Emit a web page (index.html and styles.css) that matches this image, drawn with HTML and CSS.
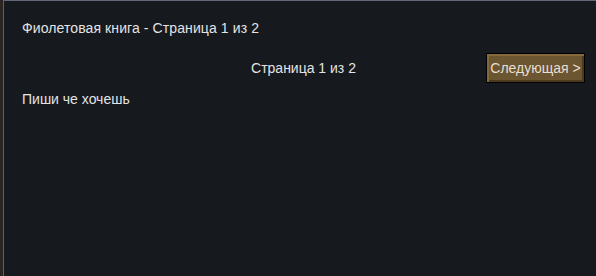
FILE: index.html
```html
<!doctype html>
<html>
<head>
    <meta charset="UTF-8" />
    <title>Фиолетовая книга</title>
    <link rel="stylesheet" href="styles.css">
</head>
<body>
    <div class="frame">
        <div class="book_panel">
            <div class="book_title">Фиолетовая книга - Страница 1 из 2</div>
            <div class="pager">
                <span class="pager_spacer"></span>
                <span class="page_label">Страница 1 из 2</span>
                <button class="next_btn">Следующая &gt;</button>
            </div>
            <div class="page_text">Пиши че хочешь</div>
        </div>
    </div>
</body>
</html>
```
FILE: styles.css
```css
html, body {
    margin: 0;
    padding: 0;
    height: 100%;
}
body {
    background: #2b2521;
    font-family: "Liberation Sans", Arial, Helvetica, sans-serif;
    font-size: 14px;
    line-height: 16px;
    color: #e4e4e4;
    overflow: hidden;
}
.frame {
    display: flex;
    height: 100%;
    padding-left: 3px;
}
.book_panel {
    flex: 1;
    background: #16191e;
    border-left: 1px solid #5a6270;
    border-top: 1px solid #5f6778;
    padding: 19px 11px 0 18px;
}
.book_title {
    height: 16px;
    letter-spacing: 0.1px;
}
.pager {
    display: grid;
    grid-template-columns: 1fr auto 1fr;
    align-items: center;
    margin-top: 17px;
}
.page_label {
    text-align: center;
}
.next_btn {
    justify-self: end;
    height: 30px;
    width: 99px;
    padding: 0;
    font-family: inherit;
    font-size: 14px;
    color: #e6dfd2;
    background: #6c5531;
    border: 1px solid #000000;
    box-shadow: inset 2px 2px 0 #86693a, inset -2px -2px 0 #4b3a1e;
    cursor: pointer;
}
.page_text {
    margin-top: 8px;
}
```
